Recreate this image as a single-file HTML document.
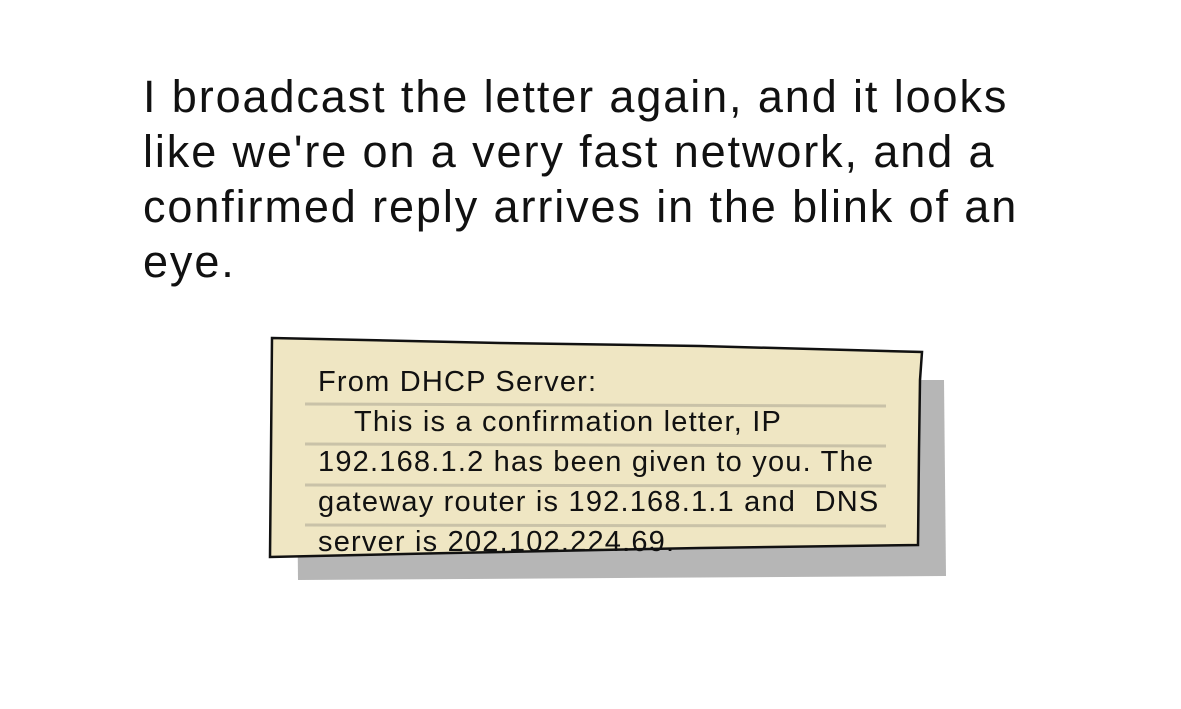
<!DOCTYPE html>
<html><head><meta charset="utf-8"><style>
body{margin:0;width:1181px;height:709px;background:#fff;position:relative;overflow:hidden;font-family:"Liberation Sans",sans-serif;}
.main{position:absolute;left:143px;top:69px;font-size:45px;line-height:55px;color:#111;white-space:nowrap;letter-spacing:1.9px}
.lt{position:absolute;left:318px;font-size:29px;line-height:40px;color:#111;white-space:nowrap;letter-spacing:1.2px}
</style></head><body>
<div class="main">I broadcast the letter again, and it looks<br>like we're on a very fast network, and a<br>confirmed reply arrives in the blink of an<br>eye.</div>
<svg width="1181" height="709" style="position:absolute;left:0;top:0">
<polygon points="296,380 944,380 946,576 298,580" fill="#b6b6b6"/>
<polygon points="272,338 500,343 700,346 922,352 920,380 919,450 918,545 700,548 450,553 270,557 271,450" fill="#efe6c3" stroke="#111" stroke-width="2.5"/>
<g stroke="#c9c2a8" stroke-width="3">
<line x1="305" y1="404" x2="886" y2="406"/>
<line x1="305" y1="444" x2="886" y2="446"/>
<line x1="305" y1="485" x2="886" y2="486"/>
<line x1="305" y1="525" x2="886" y2="526"/>
</g>
</svg>
<div class="lt" style="top:362px">From DHCP Server:</div>
<div class="lt" style="top:402px;left:354px">This is a confirmation letter, IP</div>
<div class="lt" style="top:442px">192.168.1.2 has been given to you. The</div>
<div class="lt" style="top:482px">gateway router is 192.168.1.1 and&nbsp; DNS</div>
<div class="lt" style="top:522px">server is 202.102.224.69.</div>
</body></html>
